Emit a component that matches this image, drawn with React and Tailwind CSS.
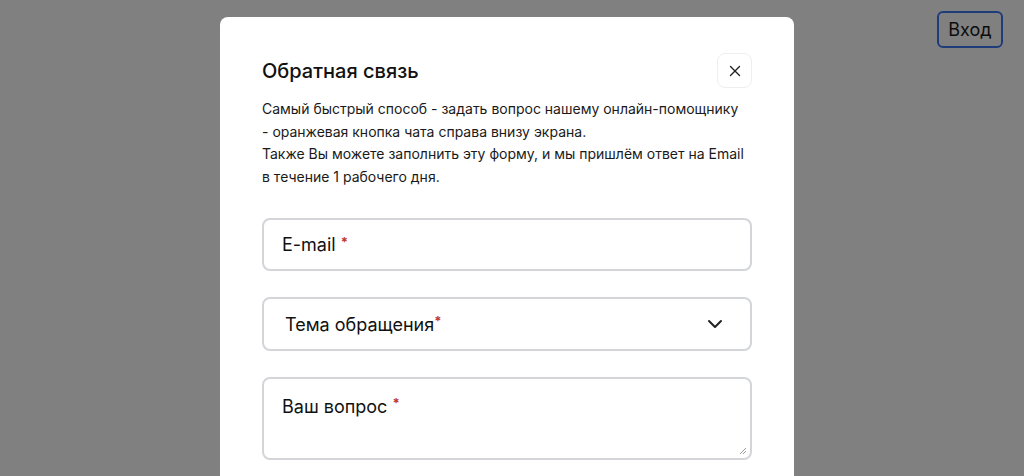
import { X, ChevronDown } from 'lucide-react'

function Field({ children, className }) {
  return (
    <div className={'rounded-lg border-2 border-[#d3d5d9] bg-white ' + className}>
      {children}
    </div>
  )
}

export default function App() {
  return (
    <div className="relative h-[476px] w-full overflow-hidden bg-[#808080]" style={{ fontFamily: 'Inter, sans-serif' }}>
      <header className="flex justify-end pr-[21px] pt-[11px]">
        <button className="h-[37px] w-[66px] rounded-md border-2 border-[#1f3c7a] text-[18px] text-[#0d0d0d]">
          Вход
        </button>
      </header>

      <div className="absolute left-[220px] top-[17px] w-[574px] rounded-lg bg-white px-[42px] pt-[36px] pb-10">
        <div className="flex items-center justify-between">
          <h2 className="text-[20px] font-medium text-[#111]">Обратная связь</h2>
          <button className="flex h-[35px] w-[35px] items-center justify-center rounded-lg border border-[#eeeeee] text-[#222]">
            <X size={18} strokeWidth={1.8} />
          </button>
        </div>

        <p className="mt-[10px] text-[14px] leading-[22.5px] text-[#1a1a1a]">
          Самый быстрый способ - задать вопрос нашему онлайн-помощнику
          <br />- оранжевая кнопка чата справа внизу экрана.
          <br />Также Вы можете заполнить эту форму, и мы пришлём ответ на Email
          <br />в течение 1 рабочего дня.
        </p>

        <div className="mt-[30px] flex flex-col gap-[26px]">
          <Field className="flex h-[53px] items-center px-[18px]">
            <span className="text-[18px] text-[#111]">E-mail</span>
            <span className="ml-[5px] -mt-[4px] text-[13px] font-bold text-[#c0392b]">*</span>
          </Field>

          <Field className="flex h-[54px] items-center justify-between pl-[21px] pr-[23px]">
            <div className="flex items-center">
              <span className="text-[18px] text-[#111]">Тема обращения</span>
              <span className="-mt-[4px] text-[13px] font-bold text-[#c0392b]">*</span>
            </div>
            <ChevronDown size={24} strokeWidth={2} className="text-[#222]" />
          </Field>

          <Field className="relative h-[83px] px-[18px] pt-[14px]">
            <div className="flex items-start">
              <span className="text-[18px] text-[#111]">Ваш вопрос</span>
              <span className="ml-[5px] mt-[1px] text-[13px] font-bold text-[#c0392b]">*</span>
            </div>
            <svg className="absolute bottom-[3px] right-[3px]" width="9" height="9" viewBox="0 0 9 9">
              <path d="M8 2 L2 8 M8 5 L5 8" stroke="#999" strokeWidth="1" />
            </svg>
          </Field>
        </div>
      </div>
    </div>
  )
}
